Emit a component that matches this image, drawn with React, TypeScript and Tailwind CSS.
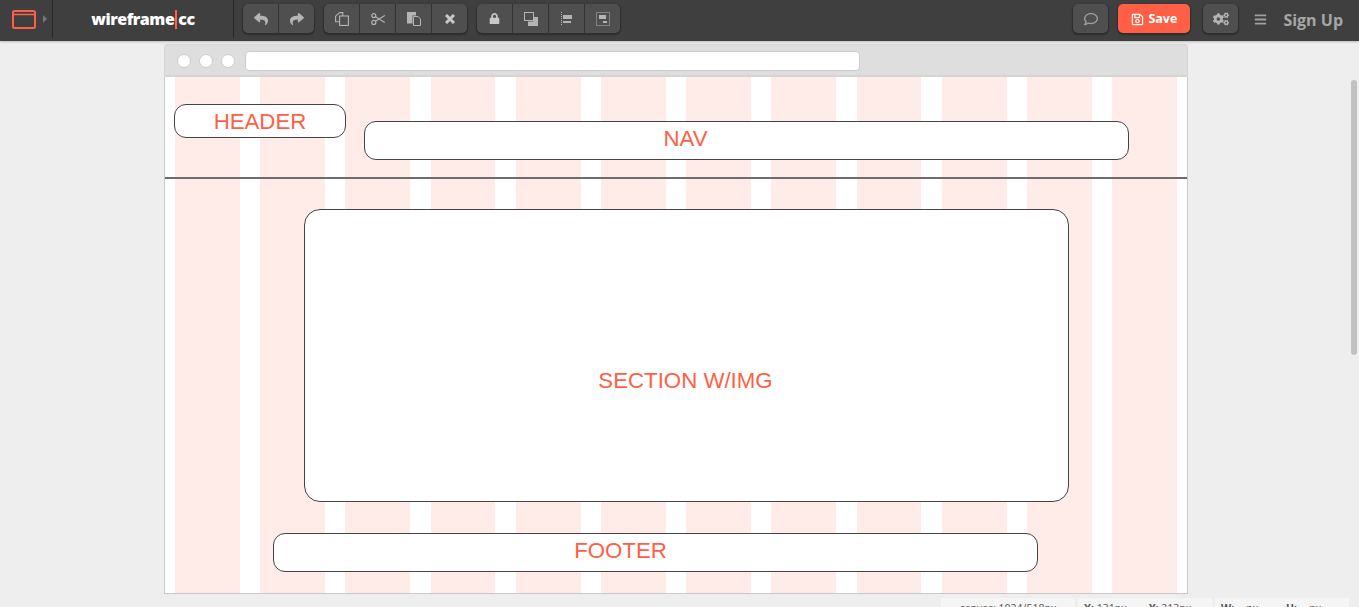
import React from "react";
import { FaReply, FaShare, FaLock, FaRegSave, FaRegComment, FaCogs, FaBars } from "react-icons/fa";

const CopyIcon = () => (
    <svg width="14" height="14" viewBox="0 0 14 14" fill="none" stroke="#b4b4b4" strokeWidth="1.100">
        <path d="M4.500 .6h3.300v3.400M4.500 .6L.6 4.200v5.600h4" />
        <rect x="4.600" y="4" width="8.800" height="9.400" />
    </svg>
);

const ScissorsIcon = () => (
    <svg width="14" height="12" viewBox="0 0 14 12" fill="none" stroke="#b4b4b4" strokeWidth="1.200">
        <circle cx="2.800" cy="2.600" r="2" />
        <circle cx="2.800" cy="9.400" r="2" />
        <path d="M4.500 3.700L13.800 9.500M4.500 8.300L13.800 2.500" />
    </svg>
);

const PasteIcon = () => (
    <svg width="14" height="14" viewBox="0 0 14 14">
        <path d="M0 0h9v3.500H5.500v8H0z" fill="#b4b4b4" />
        <path d="M6.500 4.500h4.500l2.500 2.500v6.500H6.500z" fill="#4f4f4f" stroke="#b4b4b4" strokeWidth="1" />
    </svg>
);

const DeleteIcon = () => (
    <svg width="10" height="10" viewBox="0 0 10 10" stroke="#c8c8c8" strokeWidth="3">
        <path d="M1 1l8 8M9 1l-8 8" />
    </svg>
);

const LayerIcon = () => (
    <svg width="14" height="14" viewBox="0 0 14 14">
        <path d="M4 9.500h5.500V5H14v9H4z" fill="#b4b4b4" />
        <rect x="0.500" y="0.500" width="9" height="8" fill="none" stroke="#b4b4b4" />
    </svg>
);

const AlignIcon = () => (
    <svg width="11" height="14" viewBox="0 0 11 14">
        <path d="M.5 0v14" stroke="#b4b4b4" strokeDasharray="1 1" />
        <rect x="2" y="3" width="9" height="4" fill="#b4b4b4" />
        <rect x="2" y="9" width="8" height="2" fill="#b4b4b4" />
    </svg>
);

const GroupIcon = () => (
    <svg width="14" height="14" viewBox="0 0 14 14">
        <rect x="0.500" y="0.500" width="13" height="13" fill="none" stroke="#b4b4b4" strokeDasharray="1 1" />
        <rect x="3" y="3" width="7" height="4" fill="#b4b4b4" />
        <rect x="7" y="9" width="4" height="2" fill="#b4b4b4" />
    </svg>
);

const ToolGroup = ({ items, className }: { items: React.ReactNode[]; className: string }) => (
    <div className={`mt-[4px] flex h-[29px] rounded-[5px] bg-[#4f4f4f] shadow-[0_1px_1px_1px_#2e2e2e] ${className}`}>
        {items.map((item, i) => (
            <div key={i} className={`flex flex-1 items-center justify-center ${i > 0 ? "border-l border-[#343434]" : ""}`}>
                {item}
            </div>
        ))}
    </div>
);

const Block = ({ label, className }: { label: string; className: string }) => (
    <div className={`absolute flex items-center justify-center border border-[#444444] bg-white text-[22.25px] text-[#ff5f45] ${className}`}>
        {label}
    </div>
);

const StatusPanel = ({ children }: { children: React.ReactNode }) => (
    <div className="flex h-[20px] w-[134px] bg-[#f5f5f5] pt-[3px] text-[10.5px] leading-[14px] text-[#555555]">
        {children}
    </div>
);

export default function App() {
    const columns = Array.from({ length: 12 }, (_, i) => i);

    return (
        <div className="relative flex h-[607px] flex-col overflow-hidden bg-[#eeeeee] font-['Open_Sans',sans-serif]">
            <header className="flex h-[41px] shrink-0 items-start bg-[#3f3f3f] shadow-[0_1px_2px_#bbbbbb]">
                <div className="flex h-[38px] w-[53px] items-center border-r border-[#262626] pl-3">
                    <svg width="24" height="19" viewBox="0 0 24 19" fill="none">
                        <rect x="1" y="1" width="22" height="17" rx="1.500" stroke="#ff5f45" strokeWidth="2" />
                        <path d="M2 4.500h20" stroke="#ff5f45" strokeWidth="1.500" />
                    </svg>
                    <span className="ml-[7px] h-0 w-0 border-y-[4px] border-l-[4px] border-y-transparent border-l-[#777777]" />
                </div>
                <div className="flex h-[38px] w-[181px] items-center justify-center border-r border-[#262626] text-[16px] font-extrabold tracking-[-0.45px] text-white">
                    wireframe<span className="mx-[1px] h-[19px] w-[2px] bg-[#ff5f45]" />cc
                </div>
                <ToolGroup
                    className="ml-[9px] w-[71px]"
                    items={[<FaReply key="undo" size={14} color="#b4b4b4" />, <FaShare key="redo" size={14} color="#b4b4b4" />]}
                />
                <ToolGroup
                    className="ml-[10px] w-[143px]"
                    items={[<CopyIcon key="copy" />, <ScissorsIcon key="cut" />, <PasteIcon key="paste" />, <DeleteIcon key="delete" />]}
                />
                <ToolGroup
                    className="ml-[10px] w-[143px]"
                    items={[
                        <FaLock key="lock" size={11} color="#c8c8c8" />,
                        <LayerIcon key="layer" />,
                        <AlignIcon key="align" />,
                        <GroupIcon key="group" />,
                    ]}
                />
                <div className="ml-auto flex items-start pr-4">
                    <ToolGroup className="w-[35px]" items={[<FaRegComment key="comment" size={14} color="#a0a0a0" />]} />
                    <button className="ml-[10px] mt-[4px] flex h-[29px] w-[72px] items-center justify-center gap-[4px] rounded-[5px] bg-[#ff5f45] pt-[1px] text-[12.5px] font-bold text-white shadow-[0_1px_1px_1px_#2e2e2e]">
                        <FaRegSave size={13} />
                        Save
                    </button>
                    <ToolGroup className="ml-[13px] w-[35px]" items={[<FaCogs key="settings" size={16} color="#b4b4b4" />]} />
                    <FaBars className="ml-[16px] mt-[13px]" size={13} color="#a0a0a0" />
                    <span className="ml-[16px] mt-[9px] text-[16px] leading-[22px] font-bold text-[#a6a6a6]">Sign Up</span>
                </div>
            </header>

            <main className="ml-[164px] mt-[3px] w-[1024px]">
                <div className="flex h-[33px] items-center gap-[8px] rounded-t-[4px] border border-b-2 border-[#d4d4d4] bg-[#dedede] pl-3 pt-[2px]">
                    <span className="h-[14px] w-[14px] rounded-full border border-[#cccccc] bg-white" />
                    <span className="h-[14px] w-[14px] rounded-full border border-[#cccccc] bg-white" />
                    <span className="h-[14px] w-[14px] rounded-full border border-[#cccccc] bg-white" />
                    <span className="ml-[2px] h-[20px] w-[615px] rounded-[4px] border border-[#cccccc] bg-white" />
                </div>
                <div className="relative h-[517px] border border-t-0 border-[#c8c8c8] bg-white font-['Liberation_Sans',sans-serif]">
                    <div className="flex h-full gap-[20.33px] px-[10px]">
                        {columns.map((c) => (
                            <div key={c} className="flex-1 bg-[#ffebe8]" />
                        ))}
                    </div>
                    <Block label="HEADER" className="left-[9px] top-[27px] h-[34px] w-[172px] rounded-[12px] pt-[2px]" />
                    <Block label="NAV" className="left-[199px] top-[44px] h-[39px] w-[765px] rounded-[12px] pb-[3px] pr-[122px]" />
                    <div className="absolute left-0 top-[100px] h-[2px] w-full bg-[#6d6d6d]" />
                    <Block label="SECTION W/IMG" className="left-[139px] top-[132px] h-[293px] w-[765px] rounded-[16px] pt-[50px] pr-[2px]" />
                    <Block label="FOOTER" className="left-[108px] top-[456px] h-[39px] w-[765px] rounded-[12px] pb-[3px] pr-[70px]" />
                </div>
            </main>

            <footer className="absolute left-[941px] top-[598px] flex gap-[3px]">
                <StatusPanel>
                    <span className="w-full text-center">canvas: 1024/518px</span>
                </StatusPanel>
                <StatusPanel>
                    <span className="ml-[6px] w-[65px]"><b>X:</b> 131px</span>
                    <span><b>Y:</b> 213px</span>
                </StatusPanel>
                <StatusPanel>
                    <span className="ml-[6px] w-[65px]"><b>W:</b> -- px</span>
                    <span><b>H:</b> -- px</span>
                </StatusPanel>
            </footer>

            <div className="absolute left-[1351px] top-[80px] h-[275px] w-[6px] rounded-full bg-[#c2c2c2]" />
        </div>
    );
}
